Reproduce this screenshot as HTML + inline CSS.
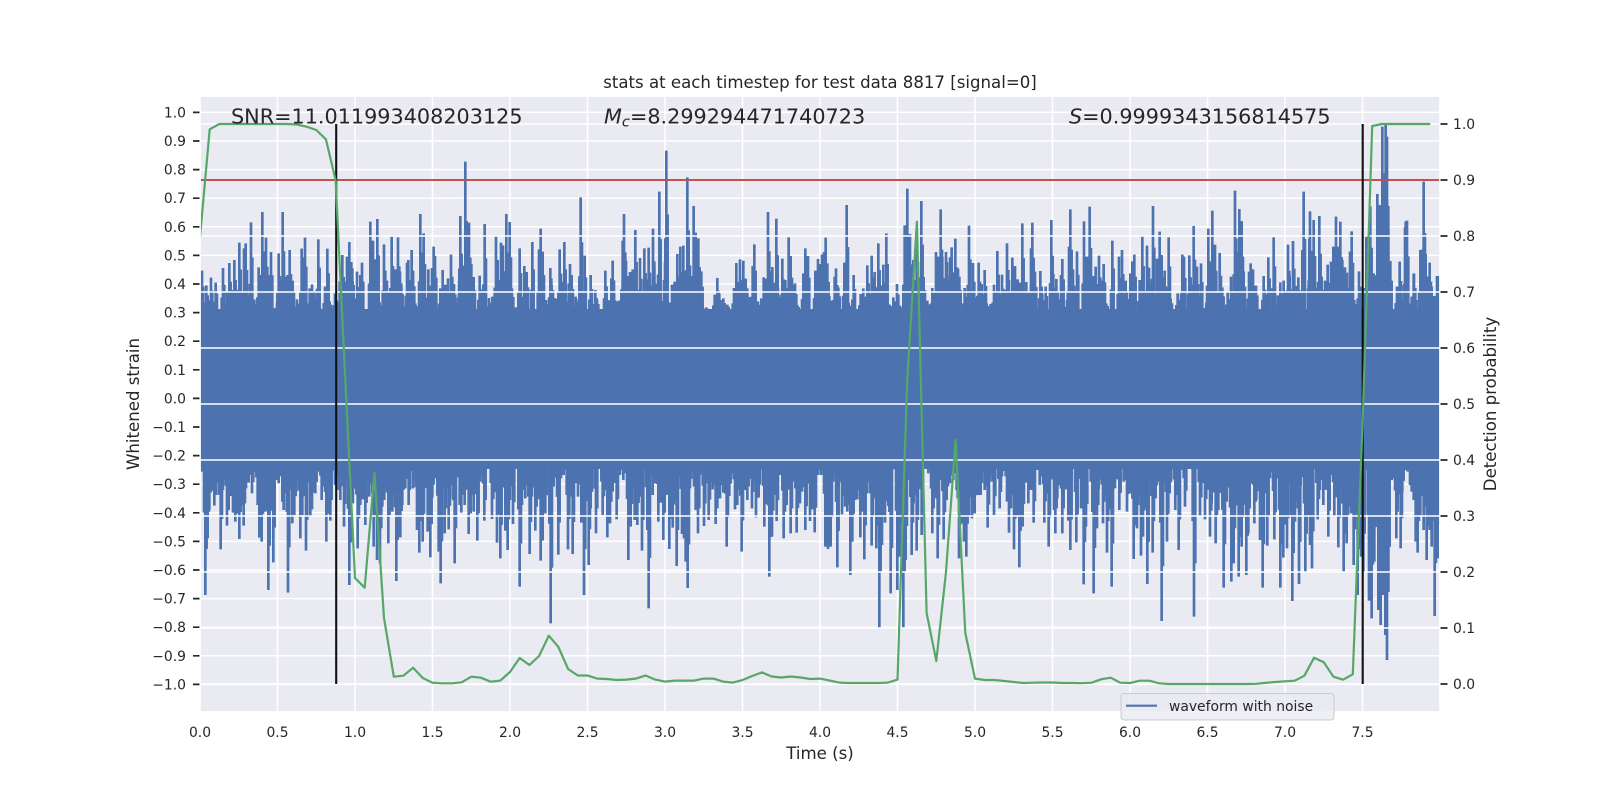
<!DOCTYPE html>
<html><head><meta charset="utf-8"><title>stats</title>
<style>
html,body{margin:0;padding:0;background:#fff}
svg{display:block}
text{font-family:"DejaVu Sans","Liberation Sans",sans-serif;fill:#262626}
.t{font-size:13.89px}
.l{font-size:16.6px}
.b{font-size:20.75px}
</style></head><body>
<svg width="1600" height="800" viewBox="0 0 1600 800" xmlns="http://www.w3.org/2000/svg">
<defs><clipPath id="ax"><rect x="200" y="96" width="1240" height="616"/></clipPath></defs>
<rect width="1600" height="800" fill="#fff"/>
<rect x="200" y="96" width="1240" height="616" fill="#EAEAF2"/>
<path stroke="#fff" stroke-width="1.5" fill="none" d="M277.5 96V712M355 96V712M432.5 96V712M510 96V712M587.5 96V712M665 96V712M742.5 96V712M820 96V712M897.5 96V712M975 96V712M1052.5 96V712M1130 96V712M1207.5 96V712M1285 96V712M1362.5 96V712M200 112.4H1440M200 141H1440M200 169.6H1440M200 198.2H1440M200 226.8H1440M200 255.4H1440M200 284H1440M200 312.6H1440M200 341.2H1440M200 369.8H1440M200 398.4H1440M200 427H1440M200 455.6H1440M200 484.2H1440M200 512.8H1440M200 541.4H1440M200 570H1440M200 598.6H1440M200 627.2H1440M200 655.8H1440M200 684.4H1440"/>
<g clip-path="url(#ax)">
<rect x="200" y="309" width="1240" height="160" fill="#4C72B0"/>
<g fill="none" stroke="#4C72B0" stroke-width="8">
<g transform="translate(197,140) scale(.33333)"><path id="a1" d="M15 392V510M28 436V510M42 413V510M56 428V510M78 384V510M97 369V510M90 455V510M107 450V510M112 360V510M127 308V510M120 475V510M141 325V510M146 310V510M162 247V510M156 465V510M172 478V510M185 382V510M196 216V510M189 405V510M207 293V510M214 405V510M222 336V510M203 450V510M230 505V510M240 488V510M245 340V510M257 216V510M266 410V510M272 405V510M278 330V510M287 422V510M300 478V510M314 326V510M320 352V510M324 293V510M338 445V510M345 433V510M352 453V510M364 298V510M370 505V510M384 440V510M391 326V510M398 484V510M414 460V510M428 424V510M436 345V510M442 425V510M450 350V510M457 306V510M463 366V510M466 385V510M480 395V510M490 405V510M495 368V510M520 245V510M528 302V510M535 358V510M541 237V510M548 487V510M561 313V510M570 422V510M584 290V510M595 388V510M603 292V510M609 395V510M613 430V510M620 498V510M630 368V510M634 360V510M644 330V510M648 392V510M655 490V510M670 222V510M680 280V510M694 388V510M705 384V510M710 320V510M714 348V510M730 445V510M737 390V510M745 434V510M753 415V510M762 344V510M771 432V510M777 487V510M787 385V510M790 228V510M805 65V510M800 450V510M816 248V510M823 372V510M830 411V510M848 407V510M857 494V510M863 252V510M876 474V510M886 470V510M897 286V510M902 360V510M912 308V510M918 316V510M928 222V510M938 246V510M945 445V510M956 502V510M968 325V510M975 475V510M982 378V510M989 396V510M1006 306V510M1026 328V510M1031 266V510M1037 335V510M1047 480V510M1060 384V510M1063 415V510M1068 450V510M1076 476V510M1088 328V510M1095 426V510M1102 306V510M1115 430V510M1119 372V510M1124 405V510M1136 470V510M1145 478V510M1151 172V510M1163 347V510M1181 405V510M1195 450V510M1200 480V510"/></g>
<g transform="translate(600,140) scale(.33333)"><path id="a2" d="M16 392V510M24 480V510M38 362V510M34 415V510M42 462V510M50 484V510M58 482V510M68 302V510M72 222V510M78 362V510M85 408V510M90 396V510M98 388V510M106 270V510M112 450V510M120 354V510M124 420V510M133 325V510M138 418V510M146 323V510M159 266V510M163 378V510M178 155V510M192 420V510M196 295V510M199 32V510M205 488V510M216 434V510M224 425V510M232 342V510M241 320V510M250 317V510M256 435V510M262 112V510M270 376V510M275 408V510M281 198V510M287 278V510M295 295V510M304 394V510M318 502V510M344 464V510M352 414V510M358 460V510M370 475V510M382 494V510M402 444V510M409 369V510M414 440V510M420 358V510M430 362V510M437 416V510M442 445V510M458 378V510M463 313V510M474 484V510M484 475V510M491 412V510M497 416V510M504 216V510M512 394V510M517 381V510M522 445V510M529 236V510M534 445V510M547 356V510M556 420V510M566 292V510M572 348V510M578 435V510M585 430V510M592 495V510M610 400V510M616 325V510M624 348V510M646 392V510M654 357V510M660 372V510M666 344V510M672 336V510M677 293V510M682 370V510M688 468V510M695 482V510M704 410V510M708 385V510M715 442V510M733 368V510M740 195V510M746 488V510M761 405V510M782 462V510M790 445V510M802 376V510M815 347V510M824 396V510M835 310V510M843 436V510M850 374V510M859 280V510M869 494V510M880 472V510M886 484V510M891 432V510M900 497V510M914 256V510M922 146V510M930 282V510M940 360V510M950 270V510M964 183V510M971 411V510M982 482V510M997 444V510M1008 336V510M1014 350V510M1022 208V510M1027 350V510M1038 336V510M1041 366V510M1050 352V510M1055 322V510M1066 296V510M1074 385V510M1078 410V510M1094 444V510M1100 488V510M1107 257V510M1113 450V510M1119 369V510M1125 472V510M1136 368V510M1145 432V510M1154 390V510M1160 490V510M1172 492V510M1182 434V510M1192 333V510M1198 460V510M1206 404V510"/></g>
<g transform="translate(1005,110) scale(.33333)"><path id="a3" d="M6 400V600M12 510V600M22 443V600M30 468V600M38 508V600M45 518V600M52 340V600M64 516V600M78 415V600M82 338V600M90 485V600M106 483V600M112 552V600M122 530V600M139 330V600M145 492V600M154 507V600M168 495V600M172 447V600M186 570V600M196 298V600M192 410V600M204 478V600M216 424V600M237 334V600M246 440V600M254 290V600M265 498V600M272 470V600M282 437V600M296 462V600M289 512V600M304 580V600M322 392V600M342 440V600M351 420V600M358 530V600M362 512V600M376 490V600M382 454V600M388 434V600M404 510V600M412 380V600M426 407V600M432 473V600M444 288V600M456 446V600M464 365V600M470 435V600M479 482V600M491 382V600M497 566V600M518 550V600M532 434V600M537 440V600M553 436V600M566 348V600M576 470V600M588 460V600M604 578V600M610 356V600M622 302V600M630 404V600M644 429V600M652 532V600M668 545V600M678 500V600M690 242V600M697 425V600M703 297V600M710 333V600M716 484V600M732 485V600M737 460V600M744 478V600M753 527V600M776 498V600M790 442V600M806 382V600M818 556V600M826 517V600M836 512V600M849 404V600M854 496V600M864 393V600M872 528V600M880 502V600M896 245V600M892 420V600M913 386V600M915 304V600M926 330V600M935 535V600M943 318V600M950 500V600M960 512V600M968 464V600M978 455V600M985 410V600M993 320V600M998 410V600M1006 335V600M1012 450V600M1020 472V600M1026 488V600M1035 425V600M1040 364V600M1048 570V600M1062 484V600M1084 380V600M1090 380V600M1096 289V600M1106 490V600M1117 252V600M1122 285V600M1128 285V600M1132 50V600M1138 190V600M1142 45V600M1146 80V600M1150 360V600M1156 453V600M1176 530V600M1184 455V600M1190 570V600M1200 352V600M1205 333V600M1220 560V600M1227 490V600"/></g>
<g transform="translate(1405,180) scale(.33333)"><path id="a4" d="M2 125V390M6 122V390M12 370V390M17 375V390M26 282V390M30 340V390M36 415V420M46 210V390M52 208V390M56 5V390M62 222V390M68 290V390M74 248V390M80 320V390M88 348V390M96 288V390M100 288V390"/></g>
<use href="#a1" transform="translate(198.3,310) scale(.33333,.2) translate(0,-510)"/>
<use href="#a2" transform="translate(601.3,310) scale(.33333,.2) translate(0,-510)"/>
<use href="#a3" transform="translate(1006.3,310) scale(.33333,.2) translate(0,-600)"/>
<use href="#a4" transform="translate(1406.3,310) scale(.33333,.2) translate(0,-390)"/>
<use href="#a1" transform="translate(195.7,310) scale(.33333,.1) translate(0,-510)"/>
<use href="#a2" transform="translate(598.7,310) scale(.33333,.1) translate(0,-510)"/>
<use href="#a3" transform="translate(1003.7,310) scale(.33333,.1) translate(0,-600)"/>
<use href="#a4" transform="translate(1403.7,310) scale(.33333,.1) translate(0,-390)"/>
<g transform="translate(197,460) scale(.33333)"><path id="b1" d="M15 35V0M20 20V0M25 405V0M32 235V0M37 148V0M45 92V0M52 137V0M58 105V0M64 40V0M71 268V0M78 90V0M82 22V0M90 197V0M95 150V0M103 108V0M108 158V0M115 185V0M122 160V0M127 237V0M133 135V0M140 197V0M147 85V0M155 68V0M165 100V0M175 35V0M182 135V0M187 233V0M194 245V0M205 155V0M214 390V0M222 152V0M229 307V0M238 60V0M245 70V0M256 125V0M260 150V0M273 398V0M278 90V0M286 190V0M292 165V0M298 95V0M310 235V0M316 165V0M327 272V0M340 170V0M345 148V0M355 100V0M362 35V0M374 120V0M388 245V0M400 182V0M408 32V0M414 75V0M425 90V0M430 120V0M441 200V0M445 85V0M457 375V0M468 130V0M472 30V0M482 265V0M490 135V0M498 118V0M505 195V0M517 110V0M522 20V0M530 260V0M540 300V0M549 310V0M556 140V0M562 120V0M574 250V0M580 130V0M586 155V0M598 363V0M610 232V0M616 135V0M625 85V0M635 135V0M648 85V0M660 210V0M667 278V0M677 245V0M692 215V0M700 292V0M706 112V0M716 55V0M725 275V0M731 370V0M737 42V0M743 220V0M755 208V0M760 115V0M773 310V0M780 30V0M788 135V0M793 158V0M803 135V0M815 222V0M821 160V0M830 155V0M841 242V0M850 65V0M862 182V0M870 20V0M885 177V0M895 40V0M900 248V0M910 295V0M918 42V0M925 212V0M932 270V0M939 120V0M948 192V0M968 380V0M975 135V0M985 115V0M998 282V0M1005 110V0M1015 212V0M1023 95V0M1031 302V0M1037 242V0M1045 160V0M1061 490V0M1070 80V0M1084 284V0M1092 55V0M1100 45V0M1113 268V0M1120 105V0M1127 282V0M1135 70V0M1143 110V0M1153 188V0M1161 405V0M1168 110V0M1175 315V0M1181 145V0M1197 220V0"/></g>
<g transform="translate(600,460) scale(.33333)"><path id="b2" d="M8 165V0M22 232V0M30 190V0M38 95V0M50 178V0M60 45V0M70 60V0M85 300V0M92 200V0M98 88V0M104 180V0M112 195V0M118 110V0M126 272V0M133 15V0M142 210V0M146 445V0M152 45V0M158 105V0M165 70V0M175 185V0M182 128V0M190 240V0M198 105V0M208 267V0M212 150V0M218 203V0M230 318V0M236 50V0M246 222V0M252 235V0M257 305V0M263 384V0M270 85V0M282 80V0M287 150V0M294 220V0M300 45V0M312 198V0M317 45V0M326 180V0M332 65V0M338 88V0M347 192V0M352 145V0M360 115V0M370 98V0M380 260V0M388 108V0M396 40V0M405 148V0M412 135V0M418 70V0M425 275V0M436 90V0M442 120V0M448 55V0M456 145V0M462 60V0M468 172V0M476 112V0M482 10V0M493 200V0M497 15V0M508 350V0M516 230V0M525 105V0M530 183V0M540 45V0M551 235V0M560 135V0M572 220V0M578 65V0M590 218V0M600 130V0M606 95V0M616 210V0M624 70V0M630 183V0M636 148V0M644 217V0M655 45V0M664 45V0M676 260V0M684 267V0M692 260V0M700 65V0M712 322V0M717 70V0M726 163V0M735 140V0M742 155V0M751 345V0M757 245V0M765 120V0M772 118V0M781 232V0M788 155V0M793 298V0M802 100V0M815 257V0M822 115V0M829 265V0M838 505V0M846 255V0M855 188V0M865 138V0M872 400V0M880 28V0M892 390V0M900 290V0M910 505V0M917 300V0M923 60V0M935 285V0M941 130V0M950 272V0M958 65V0M965 225V0M978 10V0M985 40V0M997 220V0M1006 100V0M1013 295V0M1021 60V0M1031 238V0M1040 120V0M1050 70V0M1060 60V0M1070 90V0M1077 295V0M1085 190V0M1092 245V0M1099 290V0M1107 168V0M1116 175V0M1124 160V0M1127 15V0M1134 105V0M1142 105V0M1150 25V0M1154 90V0M1163 203V0M1170 65V0M1182 165V0M1190 5V0M1199 145V0M1206 50V0"/></g>
<g transform="translate(1005,460) scale(.33333)"><path id="b3" d="M6 125V0M12 218V0M18 145V0M27 268V0M36 170V0M43 322V0M53 200V0M62 68V0M70 130V0M78 90V0M86 188V0M97 30V0M104 75V0M118 188V0M124 90V0M131 260V0M138 55V0M147 150V0M151 220V0M157 115V0M172 220V0M182 88V0M190 182V0M196 270V0M205 25V0M214 247V0M220 55V0M228 145V0M236 373V0M243 200V0M257 65V0M266 400V0M276 205V0M281 88V0M294 190V0M300 110V0M306 278V0M320 380V0M330 85V0M343 150V0M356 65V0M366 155V0M375 100V0M386 297V0M396 205V0M402 100V0M408 287V0M414 230V0M419 30V0M427 372V0M433 60V0M443 278V0M452 115V0M459 65V0M470 483V0M478 70V0M486 245V0M494 100V0M511 150V0M521 270V0M528 30V0M540 140V0M550 5V0M567 470V0M574 10V0M585 170V0M600 178V0M606 25V0M615 230V0M620 130V0M632 250V0M640 150V0M648 75V0M656 383V0M665 125V0M679 365V0M686 310V0M692 115V0M701 350V0M710 260V0M718 105V0M724 345V0M730 220V0M738 70V0M748 190V0M754 120V0M765 240V0M773 383V0M778 30V0M787 257V0M795 55V0M808 238V0M815 55V0M826 383V0M835 293V0M846 265V0M856 70V0M862 423V0M870 185V0M876 95V0M882 372V0M887 78V0M901 335V0M907 170V0M915 255V0M921 325V0M931 20V0M938 178V0M945 90V0M955 135V0M970 230V0M978 45V0M988 170V0M1000 262V0M1010 75V0M1016 335V0M1025 250V0M1030 140V0M1038 160V0M1046 315V0M1058 405V0M1068 290V0M1075 335V0M1082 30V0M1092 422V0M1100 475V0M1108 305V0M1120 450V0M1127 495V0M1134 405V0M1141 525V0M1146 600V0M1150 395V0M1124 335V0M1130 335V0M1137 335V0M1144 335V0M1160 60V0M1165 55V0M1174 235V0M1187 265V0M1192 95V0M1200 10V0"/></g>
<g transform="translate(1405,460) scale(.33333)"><path id="b4" d="M3 30V0M8 35V0M15 75V0M20 95V0M26 120V0M32 245V0M38 278V0M46 165V0M56 210V0M65 300V0M74 210V0M80 260V0M89 468V0M98 295V0"/></g>
<use href="#b1" transform="translate(198.3,460) scale(.33333,.22)"/>
<use href="#b2" transform="translate(601.3,460) scale(.33333,.22)"/>
<use href="#b3" transform="translate(1006.3,460) scale(.33333,.22)"/>
<use href="#b4" transform="translate(1406.3,460) scale(.33333,.22)"/>
<use href="#b1" transform="translate(195.7,460) scale(.33333,.13)"/>
<use href="#b2" transform="translate(598.7,460) scale(.33333,.13)"/>
<use href="#b3" transform="translate(1003.7,460) scale(.33333,.13)"/>
<use href="#b4" transform="translate(1403.7,460) scale(.33333,.13)"/>
</g>
<path stroke="#fff" stroke-width="1.5" fill="none" d="M200 124H1440M200 180H1440M200 236H1440M200 292H1440M200 348H1440M200 404H1440M200 460H1440M200 516H1440M200 572H1440M200 628H1440M200 684H1440"/>
<path d="M200 180H1440" stroke="#C44E52" stroke-width="2" fill="none"/>
<path d="M336.2 124V684M1362.7 124V684" stroke="#111" stroke-width="2.1" fill="none"/>
<polyline fill="none" stroke="#55A868" stroke-width="2.2" stroke-linejoin="round" points="200,237 209.7,129.3 219.4,124 229,124 238.8,124 248.4,124 258.1,124 267.8,124 277.5,124 287.2,124 296.9,124.5 306.6,126.7 316.3,130 325.9,139.3 335.6,180 345.3,380 355,578 364.7,587.7 374.4,473 384,618 393.8,676.7 403.4,675.7 413.1,667.7 422.8,678 432.5,682.7 442.2,683.3 451.9,683.3 461.6,682.3 471.3,676.7 480.9,677.7 490.6,681.7 500.3,680.6 510,672 519.7,658 529.4,665 539.1,656 548.8,635.7 558.4,647 568.1,669 577.8,675.5 587.5,675.5 597.2,678.6 606.9,679 616.6,680 626.3,679.6 635.9,678.6 645.6,675.5 655.3,679.6 665,681.6 674.7,680.6 684.4,680.6 694.1,680.6 703.8,678.6 713.4,678.6 723.1,681.6 732.8,682.6 742.5,680 752.2,676 761.9,672.4 771.6,676.5 781.3,677.5 790.9,676.5 800.6,677.5 810.3,679 820,678.6 829.7,680.6 839.4,682.6 849.1,683 858.8,683 868.4,683 878.1,683 887.8,682.6 897.5,679.6 907.2,380 916.9,221.7 926.6,613 936.3,661 945.9,573 955.6,440 965.3,633 975,678.6 984.7,680 994.4,680 1004.1,681 1013.8,682 1023.4,683 1033.1,682.7 1042.8,682.5 1052.5,682.5 1062.2,683 1071.9,683 1081.6,683.2 1091.7,682.7 1101,679.3 1110.7,677.7 1120.3,682.7 1130,683 1139.7,680.7 1149.4,680.7 1159.1,683.3 1168.8,684 1178.4,684 1188.1,684 1197.8,684 1207.5,684 1217.2,684 1226.9,684 1236.6,684 1246.3,684 1255.9,683.8 1265.6,682.9 1275.3,682 1285,681.3 1294.7,680.7 1304.4,675.7 1314.1,657.7 1323.8,662.3 1333.4,676.7 1343.1,679.7 1352.8,674.3 1362.5,425 1372.2,126 1381.9,124 1391.6,124 1401.3,124 1410.9,124 1420.6,124 1430.3,124"/>
</g>
<rect x="200" y="96" width="1240" height="616" fill="none" stroke="#fff" stroke-width="1.8"/>
<path stroke="#262626" stroke-width="1.7" fill="none" d="M193 112.4H199.5M193 141H199.5M193 169.6H199.5M193 198.2H199.5M193 226.8H199.5M193 255.4H199.5M193 284H199.5M193 312.6H199.5M193 341.2H199.5M193 369.8H199.5M193 398.4H199.5M193 427H199.5M193 455.6H199.5M193 484.2H199.5M193 512.8H199.5M193 541.4H199.5M193 570H199.5M193 598.6H199.5M193 627.2H199.5M193 655.8H199.5M193 684.4H199.5M1440.5 124H1447.5M1440.5 180H1447.5M1440.5 236H1447.5M1440.5 292H1447.5M1440.5 348H1447.5M1440.5 404H1447.5M1440.5 460H1447.5M1440.5 516H1447.5M1440.5 572H1447.5M1440.5 628H1447.5M1440.5 684H1447.5"/>
<g class="t" text-anchor="end">
<text x="186" y="117.4">1.0</text><text x="186" y="146">0.9</text><text x="186" y="174.6">0.8</text><text x="186" y="203.2">0.7</text><text x="186" y="231.8">0.6</text><text x="186" y="260.4">0.5</text><text x="186" y="289">0.4</text><text x="186" y="317.6">0.3</text><text x="186" y="346.2">0.2</text><text x="186" y="374.8">0.1</text><text x="186" y="403.4">0.0</text><text x="186" y="432">−0.1</text><text x="186" y="460.6">−0.2</text><text x="186" y="489.2">−0.3</text><text x="186" y="517.8">−0.4</text><text x="186" y="546.4">−0.5</text><text x="186" y="575">−0.6</text><text x="186" y="603.6">−0.7</text><text x="186" y="632.2">−0.8</text><text x="186" y="660.8">−0.9</text><text x="186" y="689.4">−1.0</text>
</g>
<g class="t">
<text x="1453" y="129">1.0</text><text x="1453" y="185">0.9</text><text x="1453" y="241">0.8</text><text x="1453" y="297">0.7</text><text x="1453" y="353">0.6</text><text x="1453" y="409">0.5</text><text x="1453" y="465">0.4</text><text x="1453" y="521">0.3</text><text x="1453" y="577">0.2</text><text x="1453" y="633">0.1</text><text x="1453" y="689">0.0</text>
</g>
<g class="t" text-anchor="middle">
<text x="200" y="737">0.0</text><text x="277.5" y="737">0.5</text><text x="355" y="737">1.0</text><text x="432.5" y="737">1.5</text><text x="510" y="737">2.0</text><text x="587.5" y="737">2.5</text><text x="665" y="737">3.0</text><text x="742.5" y="737">3.5</text><text x="820" y="737">4.0</text><text x="897.5" y="737">4.5</text><text x="975" y="737">5.0</text><text x="1052.5" y="737">5.5</text><text x="1130" y="737">6.0</text><text x="1207.5" y="737">6.5</text><text x="1285" y="737">7.0</text><text x="1362.5" y="737">7.5</text>
</g>
<text class="l" x="820" y="88" text-anchor="middle">stats at each timestep for test data 8817 [signal=0]</text>
<text class="l" x="820" y="759" text-anchor="middle">Time (s)</text>
<text class="l" transform="translate(139,404) rotate(-90)" text-anchor="middle">Whitened strain</text>
<text class="l" transform="translate(1496,404) rotate(-90)" text-anchor="middle">Detection probability</text>
<text class="b" x="231" y="123.5">SNR=11.011993408203125</text>
<text class="b" x="604" y="123.5"><tspan font-style="italic">M</tspan><tspan font-style="italic" font-size="14.6" dy="3">c</tspan><tspan dy="-3">=8.299294471740723</tspan></text>
<text class="b" x="1069" y="123.5"><tspan font-style="italic">S</tspan>=0.9999343156814575</text>
<rect x="1121" y="693.5" width="213" height="26.5" rx="3" fill="#EAEAF2" fill-opacity=".8" stroke="#cccccc" stroke-width="1"/>
<path d="M1126 705.7H1157" stroke="#4C72B0" stroke-width="2.08" fill="none"/>
<text class="t" x="1169" y="711">waveform with noise</text>
</svg>
</body></html>
